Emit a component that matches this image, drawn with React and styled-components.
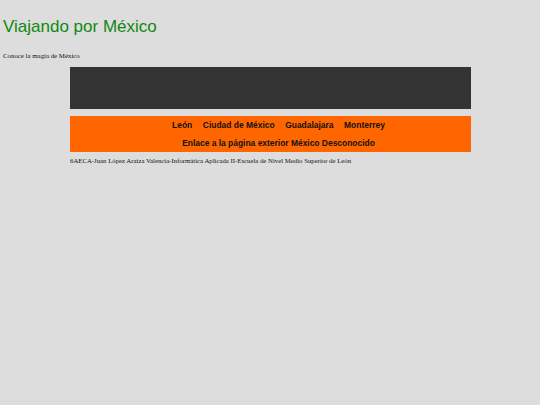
import React from "react";
import styled, { createGlobalStyle } from "styled-components";

const Global = createGlobalStyle`
  html, body { margin: 0; padding: 0; background: #dddddd; }
  body { font-family: "Liberation Serif", "Times New Roman", serif; }
`;

const Page = styled.div`
  display: flex;
  flex-direction: column;
  padding-top: 16.7px;
`;

const Title = styled.h1`
  margin: 0 0 0 3px;
  font-family: "Liberation Sans", Arial, sans-serif;
  font-weight: normal;
  font-size: 17px;
  line-height: 20px;
  color: #118811;
`;

const Tagline = styled.p`
  margin: 15.7px 0 0 3px;
  font-family: "Liberation Serif", "Times New Roman", serif;
  font-size: 6.85px;
  line-height: 8px;
  color: #111;
`;

const Main = styled.div`
  width: 401px;
  margin: 6.6px auto 0;
  display: flex;
  flex-direction: column;
`;

const Banner = styled.div`
  height: 42px;
  background: #333333;
`;

const Nav = styled.nav`
  margin-top: 7px;
  background: #ff6600;
  display: flex;
  flex-direction: column;
`;

const NavRow = styled.div`
  height: 18px;
  display: flex;
  justify-content: center;
  align-items: center;
  gap: 10.6px;
  padding-left: 17px;
`;

const NavLink = styled.a`
  font-family: "Liberation Sans", Arial, sans-serif;
  font-weight: bold;
  font-size: 8.45px;
  line-height: 18px;
  color: #111;
  text-decoration: none;
`;

const Footer = styled.p`
  margin: 5.4px 0 0 0.5px;
  font-family: "Liberation Serif", "Times New Roman", serif;
  font-size: 6.78px;
  line-height: 8px;
  color: #111;
`;

const cities = ["León", "Ciudad de México", "Guadalajara", "Monterrey"];

export default function App() {
  return (
    <>
      <Global />
      <Page>
        <Title>Viajando por México</Title>
        <Tagline>Conoce la magia de México</Tagline>
        <Main>
          <Banner />
          <Nav>
            <NavRow>
              {cities.map((c) => (
                <NavLink key={c} href="#">{c}</NavLink>
              ))}
            </NavRow>
            <NavRow>
              <NavLink href="#">Enlace a la página exterior México Desconocido</NavLink>
            </NavRow>
          </Nav>
          <Footer>6AECA-Juan López Araiza Valencia-Informática Aplicada II-Escuela de Nivel Medio Superior de León</Footer>
        </Main>
      </Page>
    </>
  );
}
